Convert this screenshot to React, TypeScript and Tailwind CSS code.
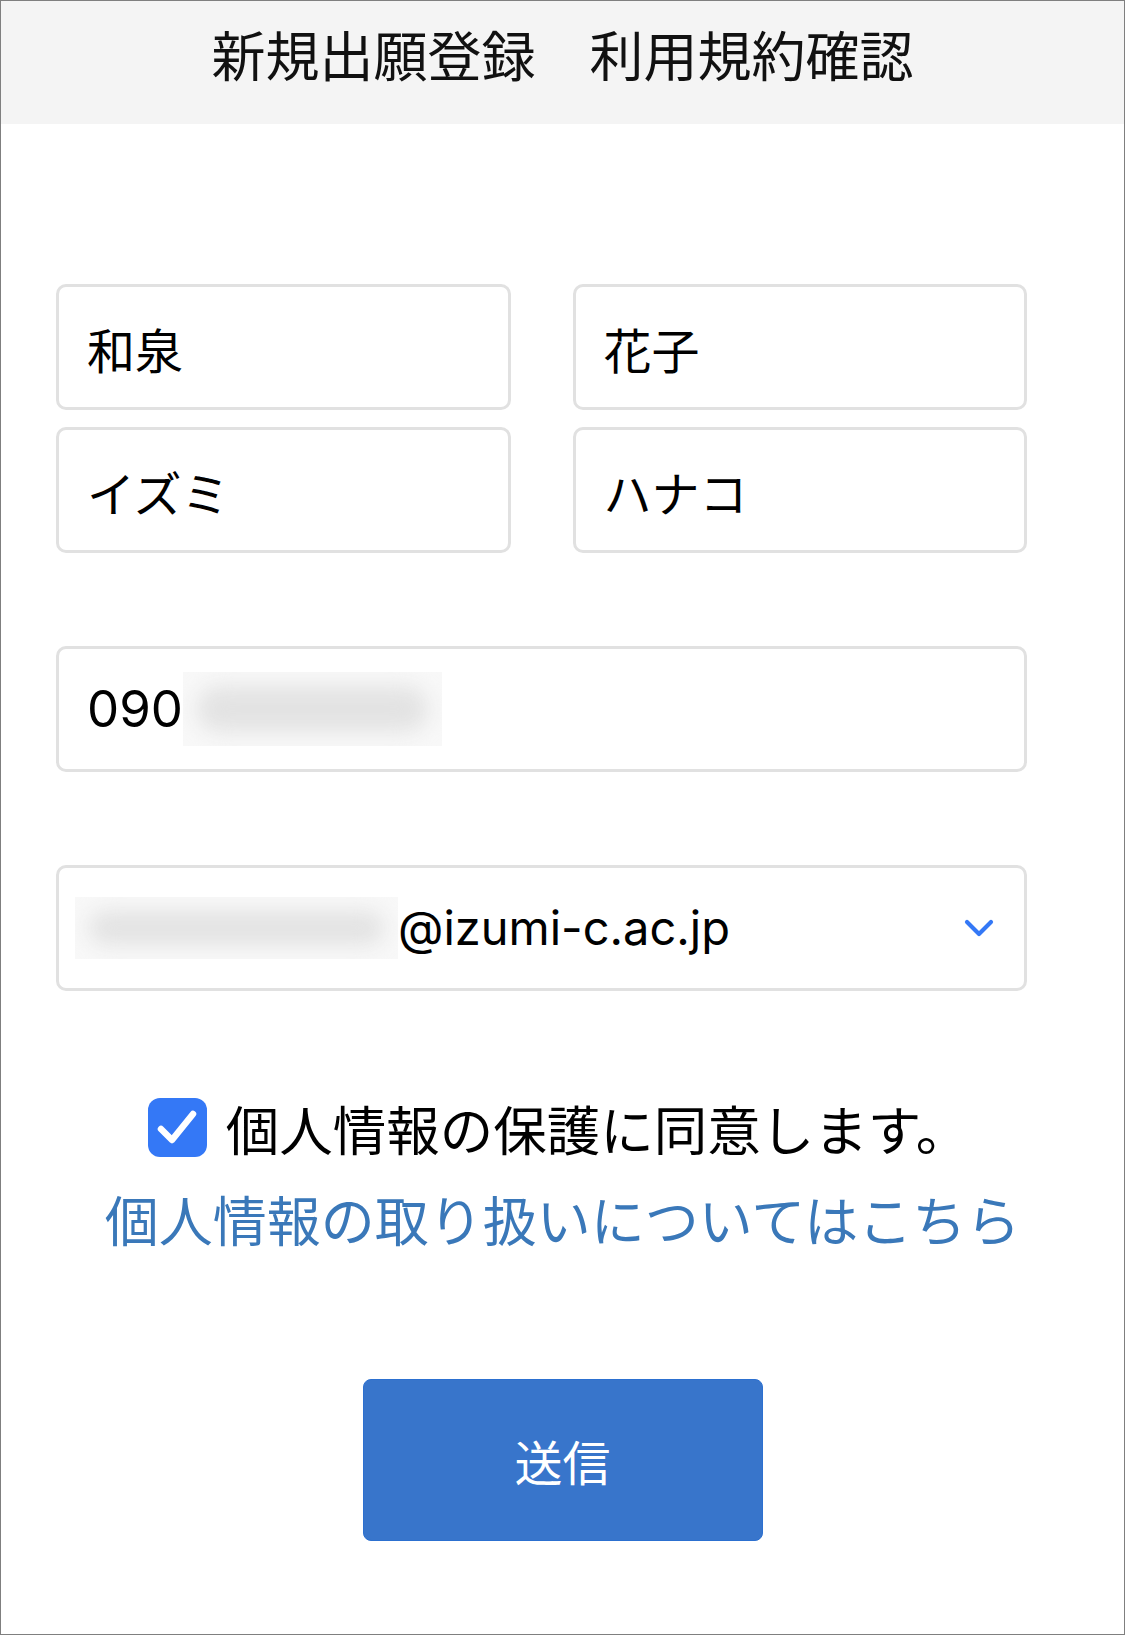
import React from "react";

const jp = { fontFamily: '"Noto Sans CJK JP", sans-serif' };
const mix = { fontFamily: 'Inter, "Noto Sans CJK JP", sans-serif' };

function Box({ children, className = "" }: { children: React.ReactNode; className?: string }) {
  return (
    <div
      className={`h-[126px] rounded-[10px] border-[3px] border-[#e1e1e1] bg-white flex items-center text-[48px] text-black ${className}`}
      style={mix}
    >
      {children}
    </div>
  );
}

function Blur({ w, h }: { w: number; h: number }) {
  return (
    <div className="relative overflow-hidden bg-[#f8f8f8]" style={{ width: w, height: h }}>
      <div className="absolute left-[14px] right-[14px] top-[14px] bottom-[14px] rounded-full bg-[#e3e3e3] blur-[10px]" />
    </div>
  );
}

export default function App() {
  return (
    <div className="w-[1125px] h-[1635px] border border-[#7f7f7f] bg-white overflow-hidden">
      <header className="h-[123px] bg-[#f4f4f4] flex justify-center pt-[26px]">
        <h1 className="text-[54px] leading-none text-[#111] font-normal whitespace-pre" style={jp}>
          新規出願登録　利用規約確認
        </h1>
      </header>

      <section className="pt-[160px] pl-[55px] w-[1026px]">
        <div className="grid grid-cols-2 gap-x-[62px] gap-y-[17px]">
          <Box className="pl-[28px] pt-[10px]">和泉</Box>
          <Box className="pl-[28px] pt-[10px]">花子</Box>
          <Box className="pl-[28px] pt-[10px]">イズミ</Box>
          <Box className="pl-[28px] pt-[10px]">ハナコ</Box>
        </div>

        <Box className="mt-[93px] pl-[28px]">
          <span className="text-[51px]">090</span>
          <Blur w={259} h={74} />
        </Box>

        <Box className="mt-[93px] pl-[16px] pr-[30px]">
          <Blur w={323} h={62} />
          <span className="text-[47px]">@izumi-c.ac.jp</span>
          <svg className="ml-auto" width="30" height="18" viewBox="0 0 30 18" fill="none">
            <path d="M3 3 L15 15 L27 3" stroke="#3478f6" strokeWidth="4.2" strokeLinecap="round" strokeLinejoin="round" />
          </svg>
        </Box>
      </section>

      <div className="mt-[107px] h-[59px] flex items-center justify-center pr-[8px]">
        <div className="w-[59px] h-[59px] rounded-[12px] bg-[#3478f6] flex items-center justify-center shrink-0">
          <svg width="59" height="59" viewBox="0 0 59 59" fill="none">
            <path d="M13 31 L24 42 L45 16" stroke="#fff" strokeWidth="6.5" strokeLinecap="round" strokeLinejoin="round" />
          </svg>
        </div>
        <span className="ml-[19px] text-[53.5px] leading-none text-black" style={jp}>
          個人情報の保護に同意します。
        </span>
      </div>

      <div className="mt-[35px] text-center">
        <a className="text-[54px] leading-none text-[#3a78b9]" style={jp}>
          個人情報の取り扱いについてはこちら
        </a>
      </div>

      <div className="mt-[131px] flex justify-center">
        <button
          className="w-[400px] h-[162px] rounded-[8px] bg-[#3875cb] border border-[#2c70d0] text-white text-[48px] flex items-center justify-center"
          style={jp}
        >
          送信
        </button>
      </div>
    </div>
  );
}
